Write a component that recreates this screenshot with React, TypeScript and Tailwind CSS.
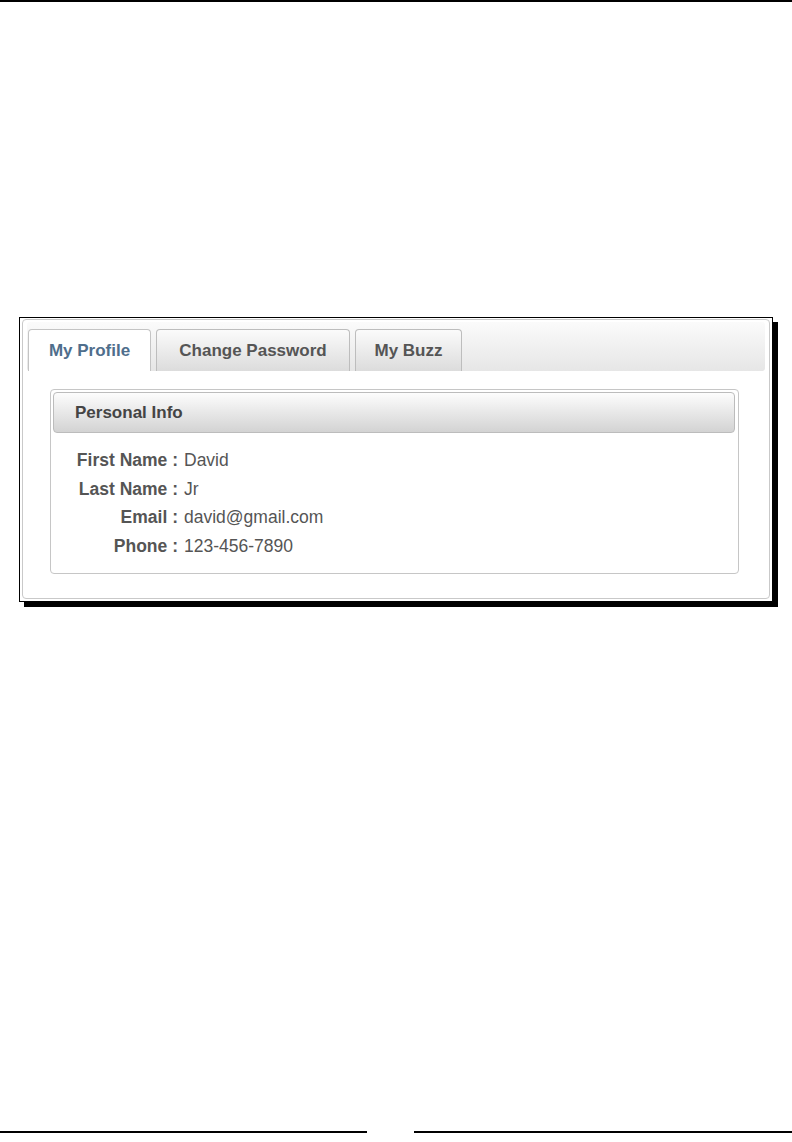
import React from "react"

// ============================================================
// Profile tabs — screenshot embedded in a book-style page
// ============================================================

const FONT = { fontFamily: '"Liberation Sans", Arial, sans-serif' }

const tabs = [
  { label: "My Profile", active: true, width: "w-[123px]" },
  { label: "Change Password", active: false, width: "w-[194px]" },
  { label: "My Buzz", active: false, width: "w-[107px]" },
]

const rows = [
  { label: "First Name", value: "David" },
  { label: "Last Name", value: "Jr" },
  { label: "Email", value: "david@gmail.com" },
  { label: "Phone", value: "123-456-7890" },
]

function Tab({ label, active, width }: { label: string; active: boolean; width: string }) {
  return (
    <div
      className={`${width} h-[42px] flex items-center justify-center rounded-t-[4px] border border-b-0 text-[17px] font-bold ${
        active
          ? "bg-white border-[#c4c4c4] text-[#4f6e8c]"
          : "bg-gradient-to-b from-[#fbfbfb] to-[#dcdcdc] border-[#bdbdbd] text-[#555]"
      }`}
    >
      {label}
    </div>
  )
}

export default function App() {
  return (
    <div className="w-[792px] h-[1142px] bg-white flex flex-col" style={FONT}>
      {/* 页眉线 */}
      <div className="h-[2px] bg-black" />

      {/* 截图框 */}
      <div className="mt-[315px] ml-[19px] w-[754px] h-[285px] border border-black bg-white shadow-[5px_5px_0_#000] p-[2px] pt-[1px]">
        <div className="h-full rounded-[4px] border border-[#c9c9c9] bg-white px-[4px] pt-[2px]">
          {/* 标签栏 */}
          <div className="h-[49px] rounded-[3px] bg-gradient-to-b from-[#fbfbfb] to-[#e6e6e6] flex items-end gap-[5px] pl-[1px]">
            {tabs.map((t) => (
              <Tab key={t.label} {...t} />
            ))}
          </div>

          {/* 内容区 */}
          <div className="mt-[18px] ml-[23px] w-[689px] h-[185px] rounded-[4px] border border-[#c6c6c6] p-[2px] pr-[3px]">
            <div className="h-[41px] rounded-[4px] border border-[#bcbcbc] bg-gradient-to-b from-[#fdfdfd] to-[#d3d3d3] flex items-center pl-[21px] text-[17px] font-bold text-[#444]">
              Personal Info
            </div>
            <div className="pt-[13px] grid grid-cols-[125px_1fr] gap-x-[6px] text-[17.5px] leading-[28.5px] text-[#555]">
              {rows.map((r) => (
                <React.Fragment key={r.label}>
                  <div className="text-right font-bold text-[17.5px]">{r.label} :</div>
                  <div>{r.value}</div>
                </React.Fragment>
              ))}
            </div>
          </div>
        </div>
      </div>

      <div className="flex-1" />

      {/* 页脚线 */}
      <div className="flex justify-between mb-[9px]">
        <div className="w-[367px] h-[2px] bg-black" />
        <div className="w-[378px] h-[2px] bg-black" />
      </div>
    </div>
  )
}
